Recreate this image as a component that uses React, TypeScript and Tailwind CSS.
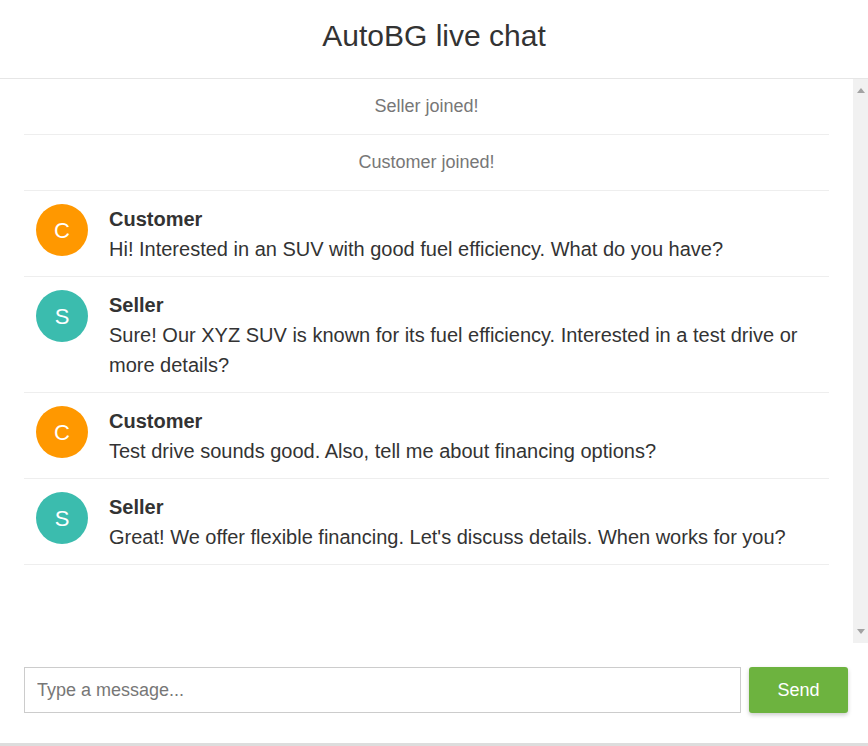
import React from 'react';

type Msg =
  | { kind: 'system'; text: string }
  | { kind: 'chat'; from: 'Customer' | 'Seller'; text: string };

const messages: Msg[] = [
  { kind: 'system', text: 'Seller joined!' },
  { kind: 'system', text: 'Customer joined!' },
  { kind: 'chat', from: 'Customer', text: 'Hi! Interested in an SUV with good fuel efficiency. What do you have?' },
  { kind: 'chat', from: 'Seller', text: 'Sure! Our XYZ SUV is known for its fuel efficiency. Interested in a test drive or more details?' },
  { kind: 'chat', from: 'Customer', text: 'Test drive sounds good. Also, tell me about financing options?' },
  { kind: 'chat', from: 'Seller', text: "Great! We offer flexible financing. Let's discuss details. When works for you?" },
];

const App = () => {
  return (
    <div className="h-[746px] flex flex-col bg-white text-[#333] font-['Liberation_Sans',Arial,sans-serif]">
      {/* Header */}
      <div className="h-[79px] shrink-0 border-b border-[#e6e6e6] flex justify-center pt-[20px]">
        <h1 className="text-[30px] leading-[32px] font-normal">AutoBG live chat</h1>
      </div>

      {/* Messages + scrollbar */}
      <div className="flex-1 flex min-h-0">
        <div className="flex-1 overflow-hidden">
          <ul className="px-[24px]">
            {messages.map((m, i) =>
              m.kind === 'system' ? (
                <li key={i} className="py-[14px] text-center text-[18px] leading-[27px] text-[#777] border-b border-[#eee]">
                  {m.text}
                </li>
              ) : (
                <li key={i} className="flex items-start pt-[13px] pb-[12px] px-[12px] border-b border-[#eee]">
                  <div
                    className={
                      'w-[52px] h-[52px] shrink-0 rounded-full flex items-center justify-center text-white text-[22px] ' +
                      (m.from === 'Customer' ? 'bg-[#ff9800]' : 'bg-[#3bbcae]')
                    }
                  >
                    {m.from[0]}
                  </div>
                  <div className="ml-[21px] min-w-0">
                    <div className="text-[20px] leading-[30px] font-bold">{m.from}</div>
                    <div className="text-[20px] leading-[30px]">{m.text}</div>
                  </div>
                </li>
              )
            )}
          </ul>
        </div>
        <div className="w-[15px] shrink-0 bg-[#f1f1f1] flex flex-col justify-between items-center py-[9px]">
          <svg width="8" height="5" viewBox="0 0 8 5"><path d="M0 5 L4 0 L8 5 Z" fill="#a3a3a3" /></svg>
          <svg width="8" height="5" viewBox="0 0 8 5"><path d="M0 0 L4 5 L8 0 Z" fill="#a3a3a3" /></svg>
        </div>
      </div>

      {/* Input */}
      <div className="h-[103px] shrink-0 flex items-start gap-[8px] pl-[24px] pr-[20px] pt-[24px] border-b-[3px] border-[#ddd]">
        <input
          type="text"
          placeholder="Type a message..."
          className="flex-1 h-[46px] border border-[#ccc] px-[12px] text-[18px] text-[#333] placeholder:text-[#777] outline-none"
        />
        <button className="w-[99px] h-[46px] rounded-[3px] bg-[#6db33f] text-white text-[18px] shadow-[0_2px_4px_rgba(0,0,0,0.2)]">
          Send
        </button>
      </div>
    </div>
  );
};

export default App;
